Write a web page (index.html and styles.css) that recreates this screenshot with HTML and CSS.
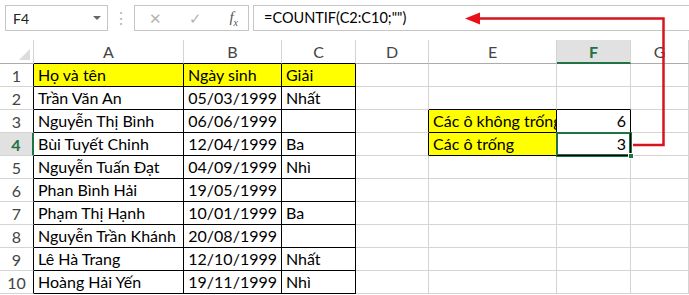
FILE: index.html
```html
<!DOCTYPE html>
<html lang="vi">
<head>
  <meta charset="UTF-8">
  <title>COUNTIF ô trống</title>
  <link rel="stylesheet" href="styles.css">
</head>
<body>

  <!-- Formula bar -->
  <div class="topbar">
    <div class="namebox">
      <span>F4</span>
      <span class="caret"></span>
    </div>
    <div class="dots">⋮</div>
    <div class="buttons">
      <span class="btn">✕</span>
      <span class="btn">✓</span>
      <span class="btn fx">f<sub>x</sub></span>
    </div>
    <div class="formula">=COUNTIF(C2:C10;"")</div>
  </div>

  <!-- Sheet -->
  <div class="sheet">
    <div class="hd corner"><span class="tri"></span></div>
    <div class="hd tb">A</div>
    <div class="hd tb">B</div>
    <div class="hd tb">C</div>
    <div class="hd">D</div>
    <div class="hd">E</div>
    <div class="hd sel">F</div>
    <div class="hd">G</div>

    <div class="rh">1</div>
    <div class="c b y">Họ và tên</div>
    <div class="c b y">Ngày sinh</div>
    <div class="c b y">Giải</div>
    <div class="c"></div>
    <div class="c"></div>
    <div class="c"></div>
    <div class="c"></div>

    <div class="rh">2</div>
    <div class="c b">Trần Văn An</div>
    <div class="c b r">05/03/1999</div>
    <div class="c b">Nhất</div>
    <div class="c"></div>
    <div class="c tb"></div>
    <div class="c tb"></div>
    <div class="c"></div>

    <div class="rh">3</div>
    <div class="c b">Nguyễn Thị Bình</div>
    <div class="c b r">06/06/1999</div>
    <div class="c b"></div>
    <div class="c lb"></div>
    <div class="c b y clip">Các ô không trống</div>
    <div class="c b r">6</div>
    <div class="c"></div>

    <div class="rh cur">4</div>
    <div class="c b">Bùi Tuyết Chinh</div>
    <div class="c b r">12/04/1999</div>
    <div class="c b">Ba</div>
    <div class="c lb"></div>
    <div class="c b y">Các ô trống</div>
    <div class="c b r active">3<span class="handle"></span></div>
    <div class="c"></div>

    <div class="rh">5</div>
    <div class="c b">Nguyễn Tuấn Đạt</div>
    <div class="c b r">04/09/1999</div>
    <div class="c b">Nhì</div>
    <div class="c"></div><div class="c"></div><div class="c"></div><div class="c"></div>

    <div class="rh">6</div>
    <div class="c b">Phan Bình Hải</div>
    <div class="c b r">19/05/1999</div>
    <div class="c b"></div>
    <div class="c"></div><div class="c"></div><div class="c"></div><div class="c"></div>

    <div class="rh">7</div>
    <div class="c b">Phạm Thị Hạnh</div>
    <div class="c b r">10/01/1999</div>
    <div class="c b">Ba</div>
    <div class="c"></div><div class="c"></div><div class="c"></div><div class="c"></div>

    <div class="rh">8</div>
    <div class="c b">Nguyễn Trần Khánh</div>
    <div class="c b r">20/08/1999</div>
    <div class="c b"></div>
    <div class="c"></div><div class="c"></div><div class="c"></div><div class="c"></div>

    <div class="rh">9</div>
    <div class="c b">Lê Hà Trang</div>
    <div class="c b r">12/10/1999</div>
    <div class="c b">Nhất</div>
    <div class="c"></div><div class="c"></div><div class="c"></div><div class="c"></div>

    <div class="rh">10</div>
    <div class="c b">Hoàng Hải Yến</div>
    <div class="c b r">19/11/1999</div>
    <div class="c b">Nhì</div>
    <div class="c"></div><div class="c"></div><div class="c"></div><div class="c"></div>
  </div>

  <!-- Red arrow from F4 to the formula bar -->
  <svg class="arrow" width="689" height="295" viewBox="0 0 689 295">
    <polyline points="633,145 663.5,145 663.5,18.5 476,18.5" fill="none" stroke="#d7141c" stroke-width="2.5"/>
    <polygon points="465,18.5 480,12.5 480,24.5" fill="#e8101a"/>
  </svg>

</body>
</html>
```

FILE: styles.css
```css
* {
  margin: 0;
  padding: 0;
  box-sizing: border-box;
}
body {
  font-family: Lato, "Liberation Sans", sans-serif;
  background-color: #fff;
  width: 689px;
  height: 295px;
  overflow: hidden;
  position: relative;
  color: #000;
}

/* formula bar */
.topbar {
  height: 40px;
  display: flex;
  align-items: flex-start;
  padding-top: 5px;
}
.namebox {
  margin-left: 5px;
  width: 103px;
  height: 26px;
  border: 1px solid #c6c6c6;
  display: flex;
  align-items: center;
  justify-content: space-between;
  padding: 0 6px 0 7px;
  font-size: 14px;
  color: #222;
}
.caret {
  width: 0;
  height: 0;
  border-left: 4px solid transparent;
  border-right: 4px solid transparent;
  border-top: 4px solid #666;
}
.dots {
  width: 26px;
  text-align: center;
  color: #b5b5b5;
  font-size: 16px;
  line-height: 26px;
}
.buttons {
  width: 115px;
  height: 26px;
  border: 1px solid #c6c6c6;
  display: flex;
  align-items: center;
  justify-content: space-between;
  padding: 0 10px 0 14px;
  color: #b4b4b4;
  font-size: 15px;
}
.buttons .fx {
  color: #555;
  font-family: "Liberation Serif", serif;
  font-style: italic;
  font-size: 15px;
}
.buttons .fx sub {
  font-size: 10px;
}
.formula {
  margin-left: 4px;
  flex: 1;
  height: 26px;
  border-top: 1px solid #c6c6c6;
  border-bottom: 1px solid #c6c6c6;
  border-left: 1px solid #c6c6c6;
  padding-left: 10px;
  font-size: 14.5px;
  line-height: 24px;
}

/* sheet grid */
.sheet {
  display: grid;
  grid-template-columns: 34px 150px 98px 74px 73px 128px 74px 58px;
  grid-template-rows: 24px repeat(10, 23px);
}
.hd {
  border-right: 1px solid #d4d4d4;
  border-bottom: 1px solid #ababab;
  color: #444;
  font-size: 16px;
  text-align: center;
  line-height: 23px;
}
.hd.tb {
  border-bottom-color: #000;
}
.hd.corner {
  position: relative;
  border-bottom-color: #ababab;
}
.tri {
  position: absolute;
  right: 3px;
  bottom: 3px;
  width: 0;
  height: 0;
  border-left: 11px solid transparent;
  border-bottom: 11px solid #dcdcdc;
}
.hd.sel {
  background-color: #e1e1e1;
  color: #217346;
  font-weight: bold;
  border-bottom: 2px solid #217346;
}
.rh {
  border-right: 1px solid #000;
  border-bottom: 1px solid #d4d4d4;
  color: #444;
  font-size: 16px;
  text-align: center;
  line-height: 23px;
}
.rh.cur {
  background-color: #e1e1e1;
  color: #217346;
  font-weight: bold;
  border-right: 2px solid #217346;
}
.c {
  border-right: 1px solid #d4d4d4;
  border-bottom: 1px solid #d4d4d4;
  font-size: 16px;
  line-height: 22px;
  padding: 0 4px;
  white-space: nowrap;
}
.c.b {
  border-right-color: #000;
  border-bottom-color: #000;
}
.c.tb {
  border-bottom-color: #000;
}
.c.lb {
  border-right-color: #000;
}
.c.y {
  background-color: #ffff00;
}
.c.r {
  text-align: right;
}
.c.clip {
  overflow: hidden;
}
.c.active {
  position: relative;
  box-shadow: inset 0 0 0 1px #217346;
  outline: 1px solid #217346;
  outline-offset: 0;
}
.handle {
  position: absolute;
  right: -4px;
  bottom: -4px;
  width: 6px;
  height: 6px;
  background-color: #217346;
  border: 1px solid #fff;
}

.arrow {
  position: absolute;
  left: 0;
  top: 0;
  pointer-events: none;
}
```
